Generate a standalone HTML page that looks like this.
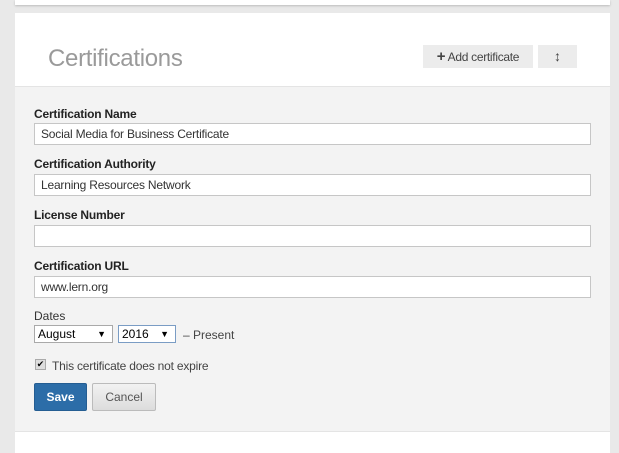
<!DOCTYPE html>
<html><head><style>
body{margin:0;width:619px;height:443px;background:#e9e9e9;font-family:"Liberation Sans",Arial,sans-serif;position:relative;overflow:hidden}
.a{position:absolute}
.top{left:15px;top:0;width:595px;height:5px;background:#fff;box-shadow:0 1px 2px #bbb}
.card{left:15px;top:13px;width:595px;height:440px;background:#fff}
.form{left:15px;top:86px;width:595px;height:344px;background:#f3f3f3;border-top:1px solid #e4e4e4;border-bottom:1px solid #e4e4e4}
h1{position:absolute;left:48px;top:45px;margin:0;font-weight:normal;font-size:24px;color:#9a9a9a;letter-spacing:-0.3px}
.btn{background:#ececec;font-size:12px;color:#444;text-align:center;line-height:23px;height:23px}
label{position:absolute;left:34px;font-size:12px;font-weight:bold;color:#222;letter-spacing:-0.2px}
.in{position:absolute;left:34px;height:20px;border:1px solid #c6c6c6;background:#fff;font-size:12px;line-height:20px;padding-left:6px;box-sizing:content-box;width:549px;color:#333;letter-spacing:-0.2px}
.sel{position:absolute;top:325px;border:1px solid #a9a9a9;background:#fff;font-size:12px;line-height:16px;padding-left:3px;box-sizing:border-box;height:18px}
.sel span{position:absolute;right:6px;font-size:9px}
</style></head><body>
<div class="a top"></div>
<div class="a card"></div>
<div class="a form"></div>
<h1>Certifications</h1>
<div class="a btn" style="left:423px;top:45px;width:110px;letter-spacing:-0.3px"><b style="font-size:15px">+</b> Add certificate</div>
<div class="a btn" style="left:538px;top:45px;width:39px;font-weight:bold;font-size:14px">↕</div>
<label style="top:107px">Certification Name</label>
<div class="in" style="top:123px">Social Media for Business Certificate</div>
<label style="top:157px">Certification Authority</label>
<div class="in" style="top:174px">Learning Resources Network</div>
<label style="top:208px">License Number</label>
<div class="in" style="top:225px"></div>
<label style="top:259px">Certification URL</label>
<div class="in" style="top:276px">www.lern.org</div>
<div class="a" style="left:34px;top:309px;font-size:12px;color:#333">Dates</div>
<div class="sel" style="left:34px;width:79px">August<span>▼</span></div>
<div class="sel" style="left:118px;width:58px;border-color:#7a9cc4">2016<span>▼</span></div>
<div class="a" style="left:183px;top:328px;font-size:12px;color:#444">– Present</div>
<div class="a" style="left:35px;top:359px;width:9px;height:9px;border:1px solid #aaa;background:#ddd;font-size:9px;line-height:9px;text-align:center">✔</div>
<div class="a" style="left:52px;top:359px;font-size:12px;color:#444;letter-spacing:-0.2px">This certificate does not expire</div>
<div class="a" style="left:34px;top:383px;width:53px;height:28px;background:#2c6da8;border:1px solid #245d92;box-sizing:border-box;border-radius:2px;color:#fff;font-weight:bold;font-size:12px;text-align:center;line-height:26px">Save</div>
<div class="a" style="left:92px;top:383px;width:64px;height:28px;background:linear-gradient(#f2f2f2,#dcdcdc);border:1px solid #bbb;box-sizing:border-box;border-radius:2px;color:#555;font-size:12px;text-align:center;line-height:26px">Cancel</div>
</body></html>
